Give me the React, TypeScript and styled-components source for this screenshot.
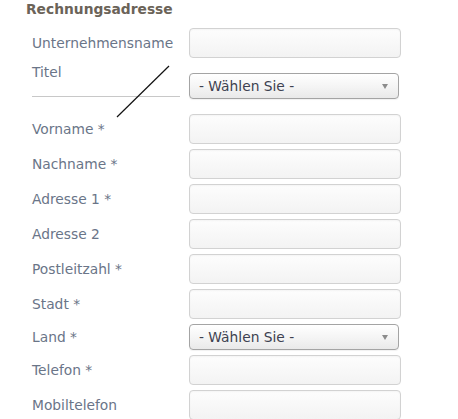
import React from "react";
import styled, { createGlobalStyle } from "styled-components";

const Global = createGlobalStyle`
  html, body { margin: 0; padding: 0; background: #ffffff; }
  body { font-family: "DejaVu Sans", Verdana, sans-serif; }
`;

const Page = styled.div`
  position: relative;
  width: 458px;
  height: 419px;
  overflow: hidden;
`;

const Heading = styled.h2`
  margin: 0;
  padding: 1px 0 0 26px;
  height: 27px;
  box-sizing: border-box;
  font-size: 13.8px;
  line-height: 16px;
  font-weight: bold;
  color: #6b6358;
`;

const Form = styled.div`
  display: flex;
  flex-direction: column;
  gap: 5px;
  padding-left: 32px;
  padding-top: 1px;
`;

const Row = styled.div`
  display: flex;
  align-items: center;
`;

const TitleRow = styled.div`
  display: flex;
  align-items: flex-start;
  height: 46px;
`;

const Label = styled.label`
  width: 157px;
  flex: none;
  font-size: 13.8px;
  line-height: 18px;
  color: #6a7588;
`;

const LabelCell = styled.div`
  width: 157px;
  flex: none;
  height: 35px;
  display: flex;
  flex-direction: column;
`;

const Rule = styled.div`
  margin-top: auto;
  margin-bottom: 1px;
  width: 148px;
  height: 1px;
  background: #c8c8c8;
`;

const Input = styled.input`
  box-sizing: border-box;
  width: 212px;
  height: 30px;
  border: 1px solid #d2d2d2;
  border-radius: 4px;
  background: linear-gradient(#fdfdfd, #f3f3f3);
  box-shadow: inset 0 1px 2px rgba(0, 0, 0, 0.04);
  font-family: inherit;
  font-size: 13px;
  padding: 0 8px;
  outline: none;
`;

const Select = styled.div<{ $offset?: number }>`
  box-sizing: border-box;
  width: 210px;
  height: 26px;
  margin-top: ${(p) => p.$offset ?? 0}px;
  border: 1px solid #a4a4a4;
  border-radius: 4px;
  background: linear-gradient(#ffffff 0%, #f4f4f4 55%, #e9e9e9 100%);
  box-shadow: 0 1px 1px rgba(0, 0, 0, 0.06);
  display: flex;
  align-items: center;
  justify-content: space-between;
  padding: 0 10px 0 9px;
  font-size: 13.8px;
  color: #3d4150;
`;

const Arrow = styled.span`
  width: 0;
  height: 0;
  border-left: 3.5px solid transparent;
  border-right: 3.5px solid transparent;
  border-top: 5px solid #8c8c8c;
  margin-top: 1px;
`;

const Annotation = styled.svg`
  position: absolute;
  left: 0;
  top: 0;
  pointer-events: none;
`;

const fields: { label: string; kind: "input" | "select" }[] = [
  { label: "Vorname *", kind: "input" },
  { label: "Nachname *", kind: "input" },
  { label: "Adresse 1 *", kind: "input" },
  { label: "Adresse 2", kind: "input" },
  { label: "Postleitzahl *", kind: "input" },
  { label: "Stadt *", kind: "input" },
  { label: "Land *", kind: "select" },
  { label: "Telefon *", kind: "input" },
  { label: "Mobiltelefon", kind: "input" },
];

export default function App() {
  return (
    <>
      <Global />
      <Page>
        <Heading>Rechnungsadresse</Heading>
        <Form>
          <Row>
            <Label>Unternehmensname</Label>
            <Input />
          </Row>
          <TitleRow>
            <LabelCell>
              <Label>Titel</Label>
              <Rule />
            </LabelCell>
            <Select $offset={10}>
              <span>- Wählen Sie -</span>
              <Arrow />
            </Select>
          </TitleRow>
          {fields.map((f) => (
            <Row key={f.label}>
              <Label>{f.label}</Label>
              {f.kind === "input" ? (
                <Input />
              ) : (
                <Select>
                  <span>- Wählen Sie -</span>
                  <Arrow />
                </Select>
              )}
            </Row>
          ))}
        </Form>
        <Annotation width="458" height="419" viewBox="0 0 458 419">
          <line x1="169" y1="66" x2="117" y2="117" stroke="#111" strokeWidth="1.2" />
        </Annotation>
      </Page>
    </>
  );
}
